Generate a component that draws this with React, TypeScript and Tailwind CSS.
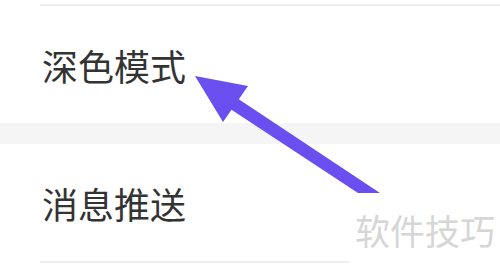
import React from "react";

export default function App() {
  const font = { fontFamily: '"Noto Sans CJK SC", "Noto Sans", sans-serif' };
  return (
    <div className="relative w-[500px] h-[267px] bg-white overflow-hidden" style={font}>
      <div className="h-[4px]" />
      <div className="ml-10 h-[2px] bg-[#eeeeee]" />
      <div className="h-[117px] flex items-center pl-[42px] text-[36px] leading-none text-[#333333]">
        深色模式
      </div>
      <div className="h-[21px] bg-[#f5f5f5]" />
      <div className="h-[117px] flex items-center pl-[42px] text-[36px] leading-none text-[#333333]">
        消息推送
      </div>
      <div className="ml-10 w-[310px] h-[2px] bg-[#eeeeee]" />

      <svg className="absolute left-0 top-0" width="500" height="267" viewBox="0 0 500 267">
        <polygon
          points="195,76 248,86 238.8,99.3 380,193 358,193 231.5,109.7 223,122"
          fill="#6b4ef0"
        />
      </svg>

      <div className="absolute left-[355px] top-[212px] text-[35px] leading-none text-[#d6d6d6] whitespace-nowrap">
        软件技巧
      </div>
    </div>
  );
}
